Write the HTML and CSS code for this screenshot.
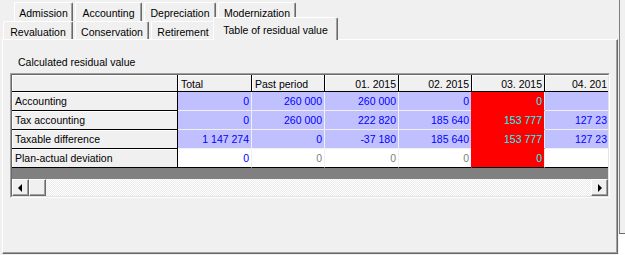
FILE: index.html
```html
<!DOCTYPE html>
<html>
<head>
	<title>Residual value</title>
	<meta charset="utf-8">
	<link rel="stylesheet" href="styles.css">
</head>
<body>

	<div class="window">

		<div class="pages">

			<div class="tabs tabs--back">
				<div class="tab tab--admission">Admission</div>
				<div class="tab tab--accounting">Accounting</div>
				<div class="tab tab--depreciation">Depreciation</div>
				<div class="tab tab--modernization">Modernization</div>
			</div>

			<div class="tabs tabs--front">
				<div class="tab tab--revaluation">Revaluation</div>
				<div class="tab tab--conservation">Conservation</div>
				<div class="tab tab--retirement">Retirement</div>
				<div class="tab tab--active">Table of residual value</div>
			</div>

			<div class="sheet">
				<div class="caption">Calculated residual value</div>

				<div class="grid">
					<div class="grid-body">

						<div class="cells">
							<!-- header -->
							<div class="cell fixed"></div>
							<div class="cell fixed">Total</div>
							<div class="cell fixed">Past period</div>
							<div class="cell fixed --right">01. 2015</div>
							<div class="cell fixed --right">02. 2015</div>
							<div class="cell fixed --right">03. 2015</div>
							<div class="cell fixed --right --cut">04. 201</div>

							<!-- Accounting -->
							<div class="cell fixed">Accounting</div>
							<div class="cell value">0</div>
							<div class="cell value">260 000</div>
							<div class="cell value">260 000</div>
							<div class="cell value">0</div>
							<div class="cell value --alert">0</div>
							<div class="cell value --cut"></div>

							<!-- Tax accounting -->
							<div class="cell fixed">Tax accounting</div>
							<div class="cell value">0</div>
							<div class="cell value">260 000</div>
							<div class="cell value">222 820</div>
							<div class="cell value">185 640</div>
							<div class="cell value --alert">153 777</div>
							<div class="cell value --cut">127 23</div>

							<!-- Taxable difference -->
							<div class="cell fixed">Taxable difference</div>
							<div class="cell value">1 147 274</div>
							<div class="cell value">0</div>
							<div class="cell value">-37 180</div>
							<div class="cell value">185 640</div>
							<div class="cell value --alert">153 777</div>
							<div class="cell value --cut">127 23</div>

							<!-- Plan-actual deviation -->
							<div class="cell fixed --last">Plan-actual deviation</div>
							<div class="cell value plan --last">0</div>
							<div class="cell value plan --last --grey">0</div>
							<div class="cell value plan --last --grey">0</div>
							<div class="cell value plan --last --grey">0</div>
							<div class="cell value plan --last --alert">0</div>
							<div class="cell value plan --last --cut"></div>
						</div>

						<div class="grid-empty"></div>

						<div class="hscroll">
							<div class="sbutton"><span class="arrow arrow--left"></span></div>
							<div class="sbutton"></div>
							<div class="track"></div>
							<div class="sbutton"><span class="arrow arrow--right"></span></div>
						</div>

					</div>
				</div>
			</div>

		</div>

		<div class="side">
			<div class="side-top"></div>
			<div class="side-bottom"></div>
		</div>

	</div>

</body>
</html>
```

FILE: styles.css
```css
/* * {outline: 1px solid red;} */

body {
	margin: 0;
	background: #f0f0f0;
	font-family: "Liberation Sans", Arial, sans-serif;
	font-size: 10.5px;
	line-height: 13px;
	color: #000;
}

.window {
	display: flex;
	height: 255px;
	padding-left: 2px;
}

.pages {
	width: 616px;
	flex: none;
}

/* tabs */

.tabs {
	display: flex;
	gap: 2px;
}

.tabs--back {
	padding: 2px 0 0 12px;
	height: 19px;
}

.tabs--front {
	padding-left: 1px;
	height: 18px;
}

.tab {
	box-sizing: border-box;
	height: 19px;
	padding-top: 4px;
	border: 1px solid #fff;
	border-right-color: #696969;
	border-bottom: none;
	border-radius: 2px 2px 0 0;
	box-shadow: inset -1px 0 #a0a0a0;
	background: #f0f0f0;
	text-align: center;
	white-space: nowrap;
}

.tabs--front .tab {
	height: 18px;
}

.tab--admission { width: 59px; }
.tab--accounting { width: 67px; }
.tab--depreciation { width: 72px; }
.tab--modernization { width: 78px; }

.tab--revaluation { width: 70px; }
.tab--conservation { width: 74px; }
.tab--retirement { width: 64px; }

.tabs--front .tab--active {
	position: relative;
	z-index: 1;
	width: 125px;
	height: 23px;
	margin: -4px 0 -1px -4px;
	padding-top: 6px;
}

/* page */

.sheet {
	box-sizing: border-box;
	height: 215px;
	border: 1px solid;
	border-color: #fff #696969 #696969 #fff;
	box-shadow: inset -1px -1px #a0a0a0;
}

.caption {
	padding: 16px 0 0 15px;
}

/* string grid */

.grid {
	width: 600px;
	height: 125px;
	box-sizing: border-box;
	margin: 4px 0 0 7px;
	border: 1px solid;
	border-color: #a0a0a0 #fff #fff #a0a0a0;
}

.grid-body {
	height: 100%;
	box-sizing: border-box;
	border: 1px solid;
	border-color: #696969 #e3e3e3 #e3e3e3 #696969;
	overflow: hidden;
}

.cells {
	display: grid;
	grid-template-columns: 166px 74px 73px 74px 73px 73px 1fr;
	grid-template-rows: 17px repeat(4, 19px);
}

.cell {
	box-sizing: border-box;
	padding: 3px 2px 0 3px;
	border-right: 1px solid #f0f0f0;
	border-bottom: 1px solid #f0f0f0;
	white-space: nowrap;
	overflow: hidden;
}

/* last column runs under the right edge of the grid */
.--cut {
	border-right: none;
	padding-right: 1px;
}

.fixed {
	background: #f0f0f0;
	border-color: #000;
	box-shadow: inset 1px 1px #fff;
}

.--right {
	text-align: right;
}

.value {
	background: #c0c0ff;
	color: #00f;
	text-align: right;
}

.plan {
	background: #fff;
}

.--grey {
	color: #808080;
}

.--alert {
	background: #f00;
	color: #0ff;
	border-bottom-color: #f00;
	box-shadow: -1px 0 #f00;
}

.--last {
	border-bottom-color: #000;
}

.grid-empty {
	height: 11px;
	background: #808080;
}

/* horizontal scroll bar */

.hscroll {
	display: flex;
	height: 17px;
}

.sbutton {
	box-sizing: border-box;
	width: 17px;
	display: flex;
	align-items: center;
	justify-content: center;
	border: 1px solid;
	border-color: #fff #696969 #696969 #fff;
	box-shadow: inset -1px -1px #a0a0a0;
	background: #f0f0f0;
}

.track {
	flex: 1;
	background: repeating-conic-gradient(#fff 0 25%, #ebebeb 0 50%) 0 0 / 2px 2px;
}

.arrow {
	width: 0;
	height: 0;
	border-top: 4px solid transparent;
	border-bottom: 4px solid transparent;
}

.arrow--left {
	border-right: 4px solid #000;
	margin-right: 1px;
}

.arrow--right {
	border-left: 4px solid #000;
	margin-left: 1px;
}

/* edge of the neighbour panel */

.side {
	flex: 1;
	margin-left: 1px;
	display: flex;
	flex-direction: column;
}

.side-top {
	height: 233px;
	border-left: 1px solid #808080;
}

.side-bottom {
	flex: 1;
	border-top: 1px solid #696969;
	background: #fff;
}
```
